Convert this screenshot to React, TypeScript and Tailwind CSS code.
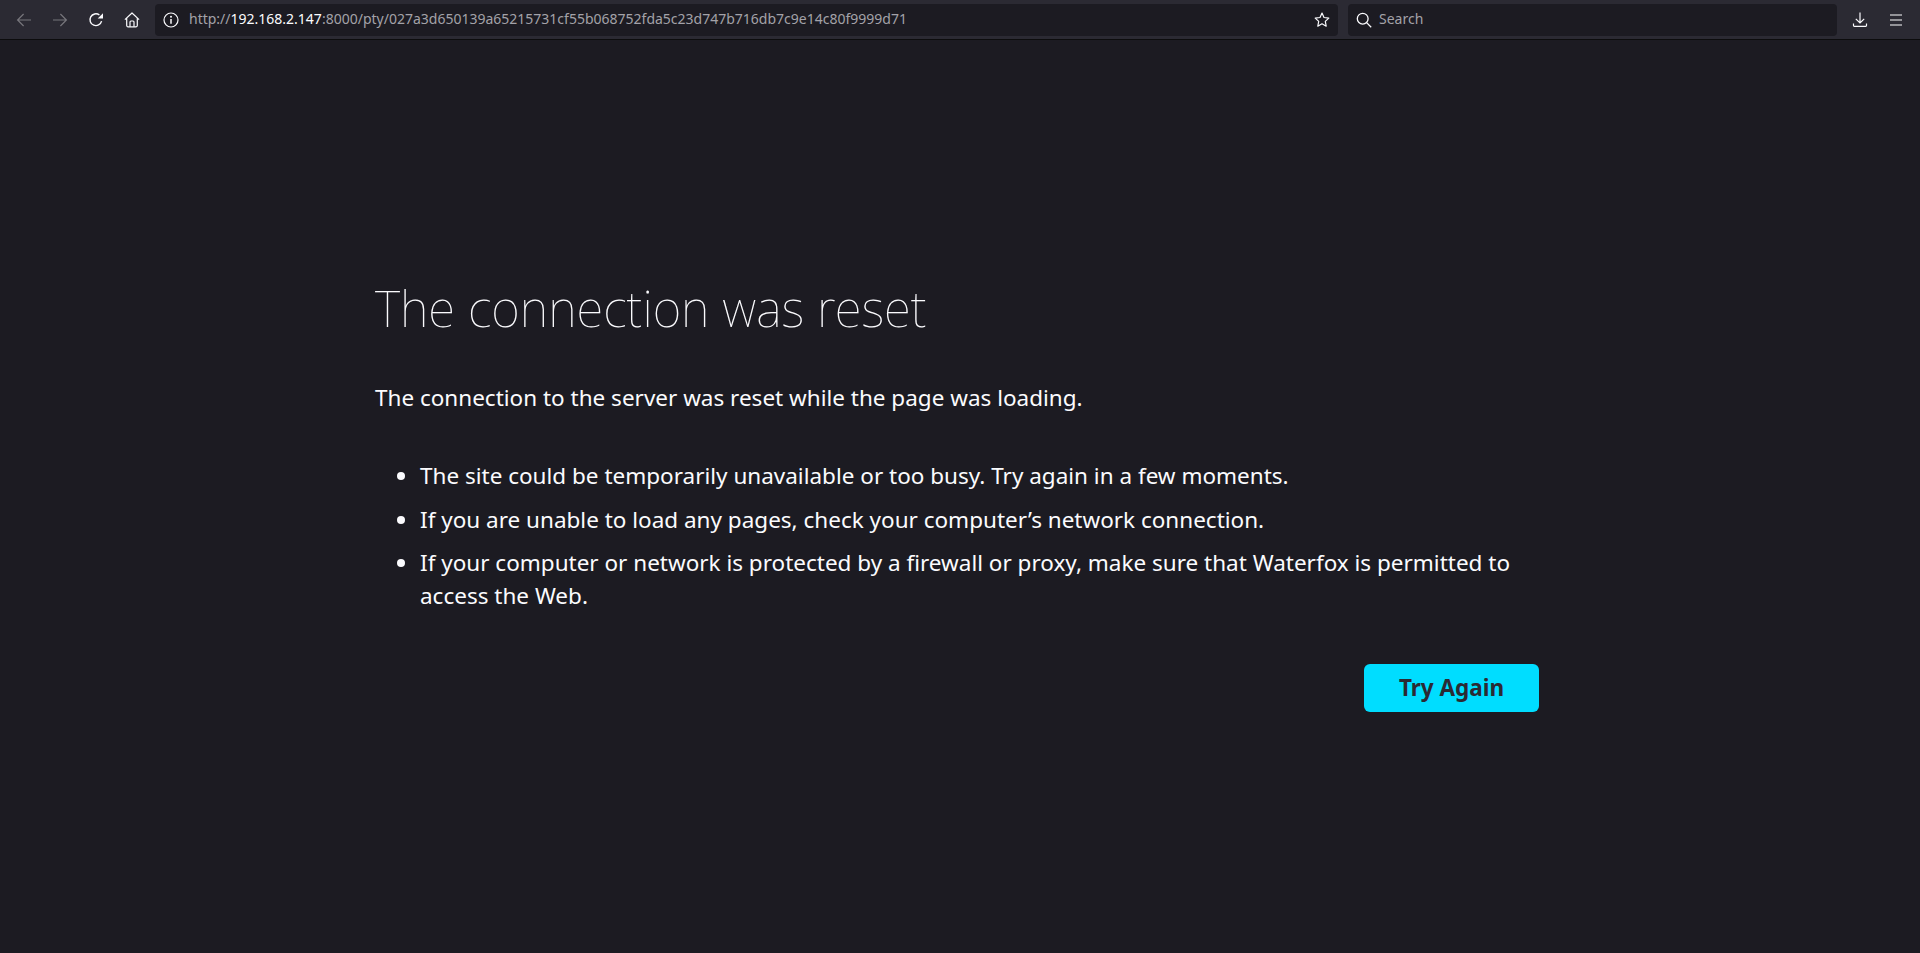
const iconClass = "w-4 h-4 shrink-0";

function Back() {
	return (
		<svg viewBox="0 0 16 16" className={iconClass + " text-[#77767c]"} fill="none" stroke="currentColor" strokeWidth="1.2">
			<path d="M15 8H1.6M7.6 2 1.6 8l6 6" />
		</svg>
	);
}

function Forward() {
	return (
		<svg viewBox="0 0 16 16" className={iconClass + " text-[#77767c]"} fill="none" stroke="currentColor" strokeWidth="1.2">
			<path d="M1 8h13.4M8.4 2l6 6-6 6" />
		</svg>
	);
}

function Reload() {
	return (
		<svg viewBox="0 0 16 16" className={iconClass + " text-[#fbfbfe]"} fill="none" stroke="currentColor" strokeWidth="1.4">
			<path d="M13.6 9.2A5.9 5.9 0 1 1 11.4 3" />
			<path d="M15 1.2v5.3H9.7z" fill="currentColor" stroke="none" />
		</svg>
	);
}

function Home() {
	return (
		<svg viewBox="0 0 16 16" className={iconClass + " text-[#fbfbfe]"} fill="none" stroke="currentColor" strokeWidth="1.2" strokeLinejoin="round">
			<path d="M.9 7.6 8 1l7.1 6.6M2.7 6.2v7.4c0 .7.5 1.2 1.2 1.2h8.2c.7 0 1.2-.5 1.2-1.2V6.2" />
			<path d="M6 14.8V10c0-.6.4-1 1-1h2c.6 0 1 .4 1 1v4.8" />
		</svg>
	);
}

function InfoIcon() {
	return (
		<svg viewBox="0 0 16 16" className={iconClass + " text-[#fbfbfe]"} fill="none" stroke="currentColor" strokeWidth="1.2">
			<circle cx="8" cy="8" r="7" />
			<path d="M8 7v4.8" strokeWidth="1.5" />
			<circle cx="8" cy="4.7" r="1" fill="currentColor" stroke="none" />
		</svg>
	);
}

function StarIcon() {
	return (
		<svg viewBox="0 0 16 16" className={iconClass + " text-[#fbfbfe]"} fill="none" stroke="currentColor" strokeWidth="1.2" strokeLinejoin="round">
			<path d="M8 1.100 10 5.500l4.800.6-3.500 3.300.9 4.800L8 11.800l-4.200 2.400.9-4.800L1.200 6.100 6 5.500z" />
		</svg>
	);
}

function SearchIcon() {
	return (
		<svg viewBox="0 0 16 16" className={iconClass + " text-[#fbfbfe]"} fill="none" stroke="currentColor" strokeWidth="1.3">
			<circle cx="6.700" cy="6.700" r="5.400" />
			<path d="m10.600 10.600 4.600 4.600" />
		</svg>
	);
}

function DownloadIcon() {
	return (
		<svg viewBox="0 0 16 16" className={iconClass + " text-[#fbfbfe]"} fill="none" stroke="currentColor" strokeWidth="1.2">
			<path d="M8 .5V10.800M3.800 6.800l4.200 4.200 4.200-4.200" />
			<path d="M1.500 11.500v2.100c0 .5.300.800.800.800h11.400c.5 0 .8-.3.8-.8v-2.100" />
		</svg>
	);
}

function MenuIcon() {
	return (
		<svg viewBox="0 0 16 16" className={iconClass + " text-[#fbfbfe]"} fill="none" stroke="currentColor" strokeWidth="1.2">
			<path d="M2 3h12M2 8h12M2 13h12" />
		</svg>
	);
}

export default function App() {
	return (
		<main className="h-[953px] overflow-hidden bg-[#1c1b22] text-[#fbfbfe] font-['Noto_Sans',sans-serif]">
			<header className="h-[39px] box-content bg-[#2b2a33] border-b border-[#0c0c0d] flex items-center pl-4">
				<div className="flex items-center gap-5 shrink-0">
					<Back />
					<Forward />
					<Reload />
					<Home />
				</div>
				<div className="ml-[15px] w-[1183px] h-8 bg-[#1c1b22] rounded flex items-center px-2 text-sm text-[#a3a2a8]">
					<span className="mr-[10px]">
						<InfoIcon />
					</span>
					<span className="pb-px">
						http://<span className="text-[#fbfbfe]">192.168.2.147</span>:8000/pty/027a3d650139a65215731cf55b068752fda5c23d747b716db7c9e14c80f9999d71
					</span>
					<span className="ml-auto">
						<StarIcon />
					</span>
				</div>
				<div className="ml-[10px] w-[489px] h-8 bg-[#1c1b22] rounded flex items-center px-2 text-sm text-[#a3a2a8]">
					<span className="mr-[7px]">
						<SearchIcon />
					</span>
					<span className="pb-0.5">Search</span>
				</div>
				<div className="flex items-center gap-5 ml-[15px]">
					<DownloadIcon />
					<MenuIcon />
				</div>
			</header>
			<section className="w-[1164px] ml-[375px] pt-[233px]">
				<h1 className="text-[49.5px] leading-[70px] font-thin">The connection was reset</h1>
				<p className="mt-[38px] text-[22.5px] leading-[33px]">The connection to the server was reset while the page was loading.</p>
				<ul className="mt-[45px] list-disc pl-[45px] text-[22.5px] leading-[33px] w-[1152px]">
					<li className="mb-[10.5px]">The site could be temporarily unavailable or too busy. Try again in a few moments.</li>
					<li className="mb-[10.5px]">If you are unable to load any pages, check your computer’s network connection.</li>
					<li>If your computer or network is protected by a firewall or proxy, make sure that Waterfox is permitted to access the Web.</li>
				</ul>
				<div className="flex justify-end mt-[52px]">
					<button className="w-[175px] h-[48px] bg-[#00ddff] text-[#2b2a33] rounded-[6px] font-bold text-[22.5px]">Try Again</button>
				</div>
			</section>
		</main>
	);
}
